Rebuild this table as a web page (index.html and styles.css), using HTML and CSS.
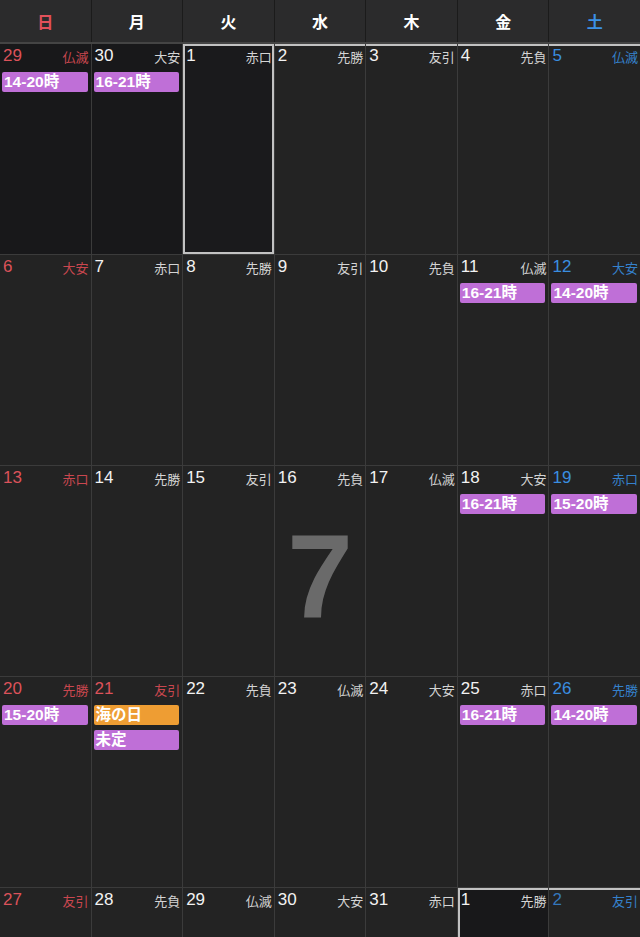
FILE: index.html
```html
<!DOCTYPE html>
<html lang="ja">
  <head>
    <meta charset="UTF-8">
    <meta name="viewport" content="width=device-width, initial-scale=1.0">
    <title>カレンダー 7月</title>
    <link rel="stylesheet" href="styles.css">
  </head>
  <body>
    <div class="week-header">
      <div class="wday sun">日</div>
      <div class="wday">月</div>
      <div class="wday">火</div>
      <div class="wday">水</div>
      <div class="wday">木</div>
      <div class="wday">金</div>
      <div class="wday sat">土</div>
    </div>
    <div class="month">
      <!-- week 1 -->
      <div class="day other sun"><div class="top"><span class="num">29</span><span class="rokuyo">仏滅</span></div><div class="event">14-20時</div></div>
      <div class="day other"><div class="top"><span class="num">30</span><span class="rokuyo">大安</span></div><div class="event">16-21時</div></div>
      <div class="day first selected"><div class="top"><span class="num">1</span><span class="rokuyo">赤口</span></div></div>
      <div class="day first"><div class="top"><span class="num">2</span><span class="rokuyo">先勝</span></div></div>
      <div class="day first"><div class="top"><span class="num">3</span><span class="rokuyo">友引</span></div></div>
      <div class="day first"><div class="top"><span class="num">4</span><span class="rokuyo">先負</span></div></div>
      <div class="day first sat"><div class="top"><span class="num">5</span><span class="rokuyo">仏滅</span></div></div>
      <!-- week 2 -->
      <div class="day sun"><div class="top"><span class="num">6</span><span class="rokuyo">大安</span></div></div>
      <div class="day"><div class="top"><span class="num">7</span><span class="rokuyo">赤口</span></div></div>
      <div class="day"><div class="top"><span class="num">8</span><span class="rokuyo">先勝</span></div></div>
      <div class="day"><div class="top"><span class="num">9</span><span class="rokuyo">友引</span></div></div>
      <div class="day"><div class="top"><span class="num">10</span><span class="rokuyo">先負</span></div></div>
      <div class="day"><div class="top"><span class="num">11</span><span class="rokuyo">仏滅</span></div><div class="event">16-21時</div></div>
      <div class="day sat"><div class="top"><span class="num">12</span><span class="rokuyo">大安</span></div><div class="event">14-20時</div></div>
      <!-- week 3 -->
      <div class="day sun"><div class="top"><span class="num">13</span><span class="rokuyo">赤口</span></div></div>
      <div class="day"><div class="top"><span class="num">14</span><span class="rokuyo">先勝</span></div></div>
      <div class="day"><div class="top"><span class="num">15</span><span class="rokuyo">友引</span></div></div>
      <div class="day"><div class="top"><span class="num">16</span><span class="rokuyo">先負</span></div></div>
      <div class="day"><div class="top"><span class="num">17</span><span class="rokuyo">仏滅</span></div></div>
      <div class="day"><div class="top"><span class="num">18</span><span class="rokuyo">大安</span></div><div class="event">16-21時</div></div>
      <div class="day sat"><div class="top"><span class="num">19</span><span class="rokuyo">赤口</span></div><div class="event">15-20時</div></div>
      <!-- week 4 -->
      <div class="day sun"><div class="top"><span class="num">20</span><span class="rokuyo">先勝</span></div><div class="event">15-20時</div></div>
      <div class="day holiday"><div class="top"><span class="num">21</span><span class="rokuyo">友引</span></div><div class="event orange">海の日</div><div class="event">未定</div></div>
      <div class="day"><div class="top"><span class="num">22</span><span class="rokuyo">先負</span></div></div>
      <div class="day"><div class="top"><span class="num">23</span><span class="rokuyo">仏滅</span></div></div>
      <div class="day"><div class="top"><span class="num">24</span><span class="rokuyo">大安</span></div></div>
      <div class="day"><div class="top"><span class="num">25</span><span class="rokuyo">赤口</span></div><div class="event">16-21時</div></div>
      <div class="day sat"><div class="top"><span class="num">26</span><span class="rokuyo">先勝</span></div><div class="event">14-20時</div></div>
      <!-- week 5 -->
      <div class="day sun"><div class="top"><span class="num">27</span><span class="rokuyo">友引</span></div></div>
      <div class="day"><div class="top"><span class="num">28</span><span class="rokuyo">先負</span></div></div>
      <div class="day"><div class="top"><span class="num">29</span><span class="rokuyo">仏滅</span></div></div>
      <div class="day"><div class="top"><span class="num">30</span><span class="rokuyo">大安</span></div></div>
      <div class="day"><div class="top"><span class="num">31</span><span class="rokuyo">赤口</span></div></div>
      <div class="day other next-start"><div class="top"><span class="num">1</span><span class="rokuyo">先勝</span></div></div>
      <div class="day next sat"><div class="top"><span class="num">2</span><span class="rokuyo">友引</span></div></div>

      <div class="month-mark">7</div>
    </div>
  </body>
</html>
```
FILE: styles.css
```css
body{
  margin: 0;
  background-color: #232323;
  font-family: 'Liberation Sans', 'Noto Sans CJK JP', sans-serif;
  color: #f2f2f2;
  overflow: hidden;
}
.week-header{
  display: grid;
  grid-template-columns: repeat(7, 1fr);
  column-gap: 1px;
  background-color: #1b1b1b;
  border-bottom: 2px solid #444444;
}
.wday{
  background-color: #2b2b2c;
  height: 42px;
  display: flex;
  align-items: center;
  justify-content: center;
  font-family: 'Noto Sans CJK JP', sans-serif;
  font-size: 16px;
  font-weight: 700;
  color: #ffffff;
}
.wday.sun{
  color: #e2515a;
}
.wday.sat{
  color: #3b91e6;
}
.month{
  position: relative;
  display: grid;
  grid-template-columns: repeat(7, 1fr);
  grid-auto-rows: 210px;
  gap: 1px;
  background-color: #3b3b3b;
}
.day{
  background-color: #232323;
  padding: 2px 2px 0 2px;
  display: flex;
  flex-direction: column;
  gap: 5px;
}
.day.other{
  background-color: #18181a;
}
.top{
  display: flex;
  justify-content: space-between;
  align-items: center;
  height: 20px;
  margin-bottom: 1px;
  padding-left: 1px;
}
.num{
  font-size: 17px;
}
.rokuyo{
  font-family: 'Noto Sans CJK JP', sans-serif;
  font-size: 13px;
  color: #d4d4d4;
}
.sun .num,
.holiday .num{
  color: #dc525a;
}
.sun .rokuyo,
.holiday .rokuyo{
  color: #c9474f;
}
.sat .num{
  color: #3a8ee0;
}
.sat .rokuyo{
  color: #3581cc;
}
.next.sat .num{
  color: #3477bb;
}
.first{
  box-shadow: inset 0 2px 0 #c2c2c2;
}
.selected{
  background-color: #1a1a1c;
  box-shadow: inset 0 0 0 2px #c2c2c2;
}
.next-start{
  box-shadow: inset 2px 2px 0 #c2c2c2;
}
.next{
  box-shadow: inset 0 2px 0 #c2c2c2;
}
.event{
  height: 20px;
  line-height: 20px;
  margin-right: 1px;
  padding-left: 2px;
  border-radius: 2px;
  background-color: #bf6fd7;
  color: #ffffff;
  font-family: 'Liberation Sans', 'Noto Sans CJK JP', sans-serif;
  font-size: 15.5px;
  font-weight: 700;
  white-space: nowrap;
  overflow: hidden;
}
.event.orange{
  background-color: #ee9d33;
}
.month-mark{
  position: absolute;
  left: 0;
  right: 0;
  top: 473px;
  text-align: center;
  font-family: 'Liberation Sans', sans-serif;
  font-size: 118px;
  font-weight: 700;
  color: #6a6a6a;
  line-height: 118px;
  pointer-events: none;
}
```
